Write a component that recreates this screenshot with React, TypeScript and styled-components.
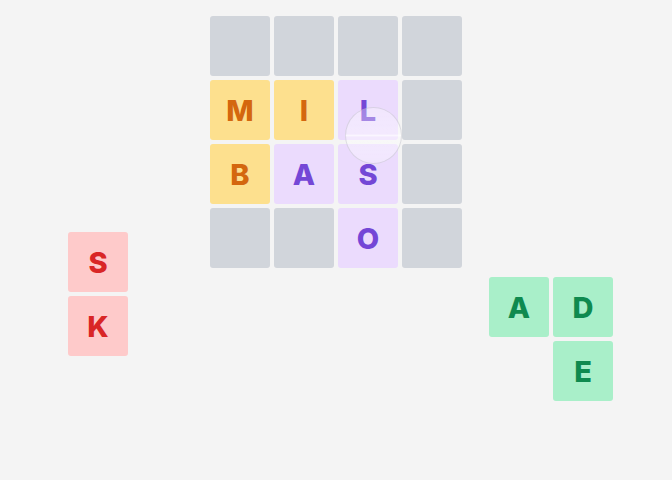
import React from "react";
import styled, { createGlobalStyle } from "styled-components";

const Global = createGlobalStyle`
  html, body { margin: 0; padding: 0; background: #f4f4f4; }
  body { font-family: Inter, Roboto, "Liberation Sans", sans-serif; }
`;

type Tone = "empty" | "yellow" | "purple" | "red" | "green" | "none";

const tones: Record<Tone, { bg: string; fg: string }> = {
  empty: { bg: "#d1d5db", fg: "#6b7280" },
  yellow: { bg: "#fde08e", fg: "#d4670e" },
  purple: { bg: "#ebdbfd", fg: "#7447d6" },
  red: { bg: "#fecaca", fg: "#d92626" },
  green: { bg: "#a9efc9", fg: "#0f8a4f" },
  none: { bg: "transparent", fg: "transparent" },
};

const Stage = styled.div`
  position: relative;
  width: 672px;
  height: 480px;
  overflow: hidden;
  background: #f4f4f4;
  display: flex;
  justify-content: center;
  padding-top: 16px;
  box-sizing: border-box;
`;

const Board = styled.div`
  display: grid;
  grid-template-columns: repeat(4, 60px);
  grid-auto-rows: 60px;
  gap: 4px;
  height: fit-content;
`;

const Tile = styled.div<{ $tone: Tone }>`
  background: ${(p) => tones[p.$tone].bg};
  color: ${(p) => tones[p.$tone].fg};
  border-radius: 3px;
  display: flex;
  align-items: center;
  justify-content: center;
  font-size: 29px;
  font-weight: 800;
  line-height: 1;
  user-select: none;
`;

const Piece = styled.div<{ $cols: number }>`
  position: absolute;
  display: grid;
  grid-template-columns: repeat(${(p) => p.$cols}, 60px);
  grid-auto-rows: 60px;
  gap: 4px;
`;

const Cursor = styled.div`
  position: absolute;
  left: 345px;
  top: 107px;
  width: 57px;
  height: 57px;
  border-radius: 50%;
  background: linear-gradient(
    to bottom,
    rgba(255, 255, 255, 0.32) 0%,
    rgba(255, 255, 255, 0.4) 47%,
    rgba(255, 255, 255, 0.75) 50%,
    rgba(255, 255, 255, 0.4) 53%,
    rgba(255, 255, 255, 0.32) 100%
  );
  border: 1.5px solid rgba(170, 170, 180, 0.35);
  box-sizing: border-box;
`;

const board: [string, Tone][] = [
  ["", "empty"], ["", "empty"], ["", "empty"], ["", "empty"],
  ["M", "yellow"], ["I", "yellow"], ["L", "purple"], ["", "empty"],
  ["B", "yellow"], ["A", "purple"], ["S", "purple"], ["", "empty"],
  ["", "empty"], ["", "empty"], ["O", "purple"], ["", "empty"],
];

export default function App() {
  return (
    <Stage>
      <Global />
      <Board>
        {board.map(([l, t], i) => (
          <Tile key={i} $tone={t}>{l}</Tile>
        ))}
      </Board>
      <Piece $cols={1} style={{ left: 68, top: 232 }}>
        <Tile $tone="red">S</Tile>
        <Tile $tone="red">K</Tile>
      </Piece>
      <Piece $cols={2} style={{ left: 489, top: 277 }}>
        <Tile $tone="green">A</Tile>
        <Tile $tone="green">D</Tile>
        <Tile $tone="none" />
        <Tile $tone="green">E</Tile>
      </Piece>
      <Cursor />
    </Stage>
  );
}
